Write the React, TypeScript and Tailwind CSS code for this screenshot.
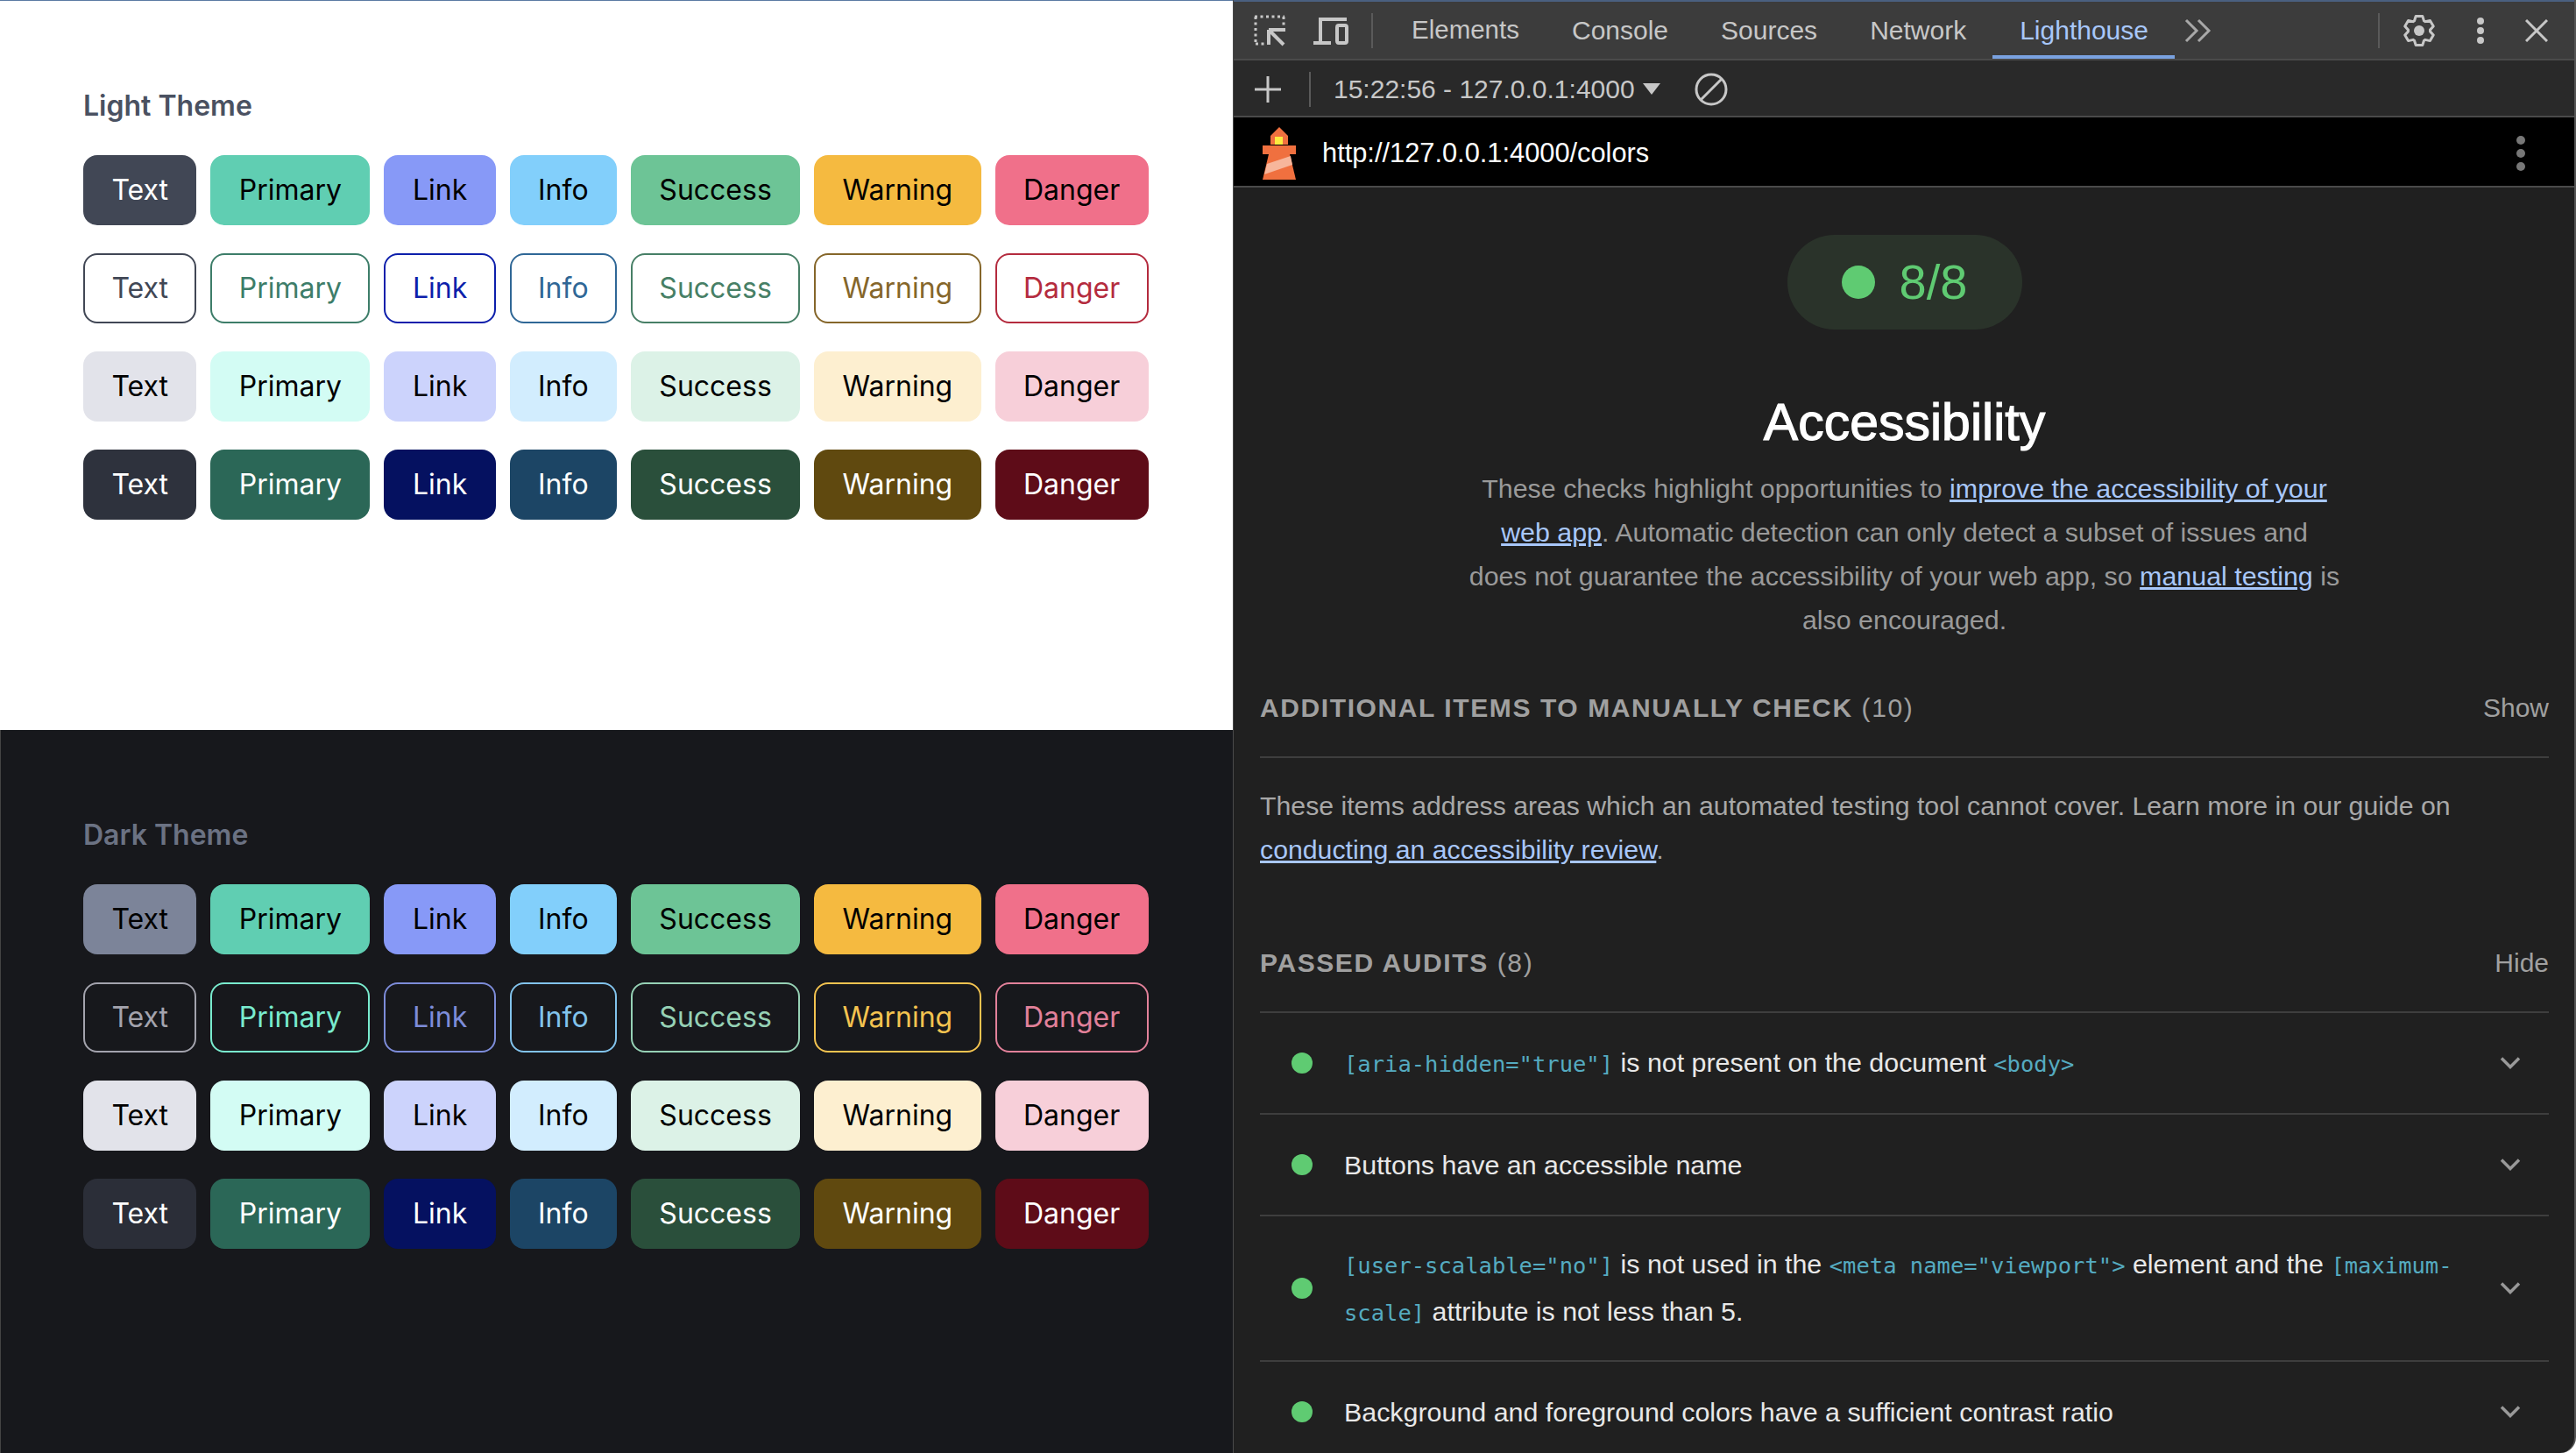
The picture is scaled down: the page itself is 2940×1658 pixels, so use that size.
const labels = ["Text", "Primary", "Link", "Info", "Success", "Warning", "Danger"];

const lightRows = [
  ["px-[32.4px] bg-[#414755] text-white", "px-[32.4px] bg-[#60ceb2] text-black", "px-[32.4px] bg-[#8799f7] text-black", "px-[32.4px] bg-[#82cffb] text-black", "px-[32.4px] bg-[#6dc496] text-black", "px-[32.4px] bg-[#f5ba40] text-black", "px-[32.4px] bg-[#f0708a] text-black"],
  ["px-[30.4px] border-2 border-[#414755] text-[#414755]", "px-[30.4px] border-2 border-[#3d7d69] text-[#3d7d69]", "px-[30.4px] border-2 border-[#0d1fab] text-[#0d1fab]", "px-[30.4px] border-2 border-[#2f6796] text-[#2f6796]", "px-[30.4px] border-2 border-[#477f66] text-[#477f66]", "px-[30.4px] border-2 border-[#85662a] text-[#85662a]", "px-[30.4px] border-2 border-[#b42b3e] text-[#b42b3e]"],
  ["px-[32.4px] bg-[#e2e3ea] text-black", "px-[32.4px] bg-[#d3fcf4] text-black", "px-[32.4px] bg-[#ccd3fc] text-black", "px-[32.4px] bg-[#d2edfe] text-black", "px-[32.4px] bg-[#dcf2e7] text-black", "px-[32.4px] bg-[#fdefd0] text-black", "px-[32.4px] bg-[#f7cfd9] text-black"],
  ["px-[32.4px] bg-[#2e323d] text-white", "px-[32.4px] bg-[#2b6757] text-white", "px-[32.4px] bg-[#051160] text-white", "px-[32.4px] bg-[#1c4565] text-white", "px-[32.4px] bg-[#2a4f3b] text-white", "px-[32.4px] bg-[#60490f] text-white", "px-[32.4px] bg-[#5e0c18] text-white"],
];

const darkRows = [
  ["px-[32.4px] bg-[#7c8499] text-black", ...lightRows[0].slice(1)],
  ["px-[30.4px] border-2 border-[#a3a3ad] text-[#a3a3ad]", "px-[30.4px] border-2 border-[#79ebce] text-[#79ebce]", "px-[30.4px] border-2 border-[#7d8cd9] text-[#7d8cd9]", "px-[30.4px] border-2 border-[#82c3ec] text-[#82c3ec]", "px-[30.4px] border-2 border-[#96d1b5] text-[#96d1b5]", "px-[30.4px] border-2 border-[#f3c350] text-[#f3c350]", "px-[30.4px] border-2 border-[#e2819a] text-[#e2819a]"],
  lightRows[2],
  ["px-[32.4px] bg-[#2b2e38] text-white", ...lightRows[3].slice(1)],
];

// six flat teeth, one pointing straight up
function gearPath() {
  const pts: string[] = [];
  for (let k = 0; k < 6; k++) {
    const a = -90 + k * 60;
    [[a - 26, 12.5], [a - 13, 17], [a + 13, 17], [a + 26, 12.5]].forEach(([deg, r]) => {
      const rad = (deg * Math.PI) / 180;
      pts.push(`${(19 + r * Math.cos(rad)).toFixed(2)} ${(19 + r * Math.sin(rad)).toFixed(2)}`);
    });
  }
  return `M${pts.join("L")}Z`;
}

function ThemePane({ title, rows, className, titleColor }: { title: string; rows: string[][]; className: string; titleColor: string }) {
  return (
    <div className={`h-[832px] pt-[96px] font-['Inter',sans-serif] ${className}`}>
      <h2 className={`h-12 mb-8 text-[32px] leading-[48px] font-semibold ${titleColor}`}>{title}</h2>
      <div className="flex flex-col gap-8">
        {rows.map((row, r) => (
          <div key={r} className="flex gap-4">
            {row.map((cls, i) => (
              <button key={i} className={`h-20 rounded-2xl text-[32px] flex items-center justify-center ${cls}`}>
                {labels[i]}
              </button>
            ))}
          </div>
        ))}
      </div>
    </div>
  );
}

function Lighthouse() {
  return (
    <svg width="40" height="60" viewBox="0 0 40 60">
      <path d="M20 0 L30 10 L30 20 L10 20 L10 10 Z" fill="#f0703f" />
      <rect x="15" y="11" width="9" height="9" fill="#fdeb3f" />
      <rect x="1" y="21" width="38" height="10" fill="#f0703f" />
      <path d="M8 31 H32 L39 60 H1 Z" fill="#f0703f" />
      <path d="M6 42 L33 33 L35 43 L3 54 Z" fill="#f7b69b" />
    </svg>
  );
}

function Chevron() {
  return (
    <svg width="24" height="14" viewBox="0 0 24 14" fill="none" stroke="#999" strokeWidth="3.5">
      <path d="M2 1.5 L12 11.5 L22 1.5" />
    </svg>
  );
}

function Code({ children }: { children: React.ReactNode }) {
  return <code className="font-['DejaVu_Sans_Mono',monospace] text-[25.5px] text-[#55abc0]">{children}</code>;
}

function AuditRow({ children, tall }: { children: React.ReactNode; tall?: boolean }) {
  return (
    <div className={`flex items-center border-b-2 border-[#3e3e3e] pl-[36px] pr-[32px] ${tall ? "h-[166px]" : "h-[116px]"}`}>
      <div className="w-6 h-6 rounded-full bg-[#5fcb72] shrink-0" />
      <div className="flex-1 ml-[36px] pr-[30px] text-[#e8e8e8] text-[30.4px] leading-[52px]">{children}</div>
      <Chevron />
    </div>
  );
}

function SectionHeader({ title, count, action }: { title: string; count: string; action: string }) {
  return (
    <div className="flex items-center justify-between border-b-2 border-[#3e3e3e] h-[111px] pb-[2px] text-[#a0a0a0]">
      <span className="tracking-[1.6px]">
        <span className="font-bold">{title}</span> {count}
      </span>
      <span>{action}</span>
    </div>
  );
}

export default function App() {
  return (
    <div className="flex w-[2940px] h-[1658px] overflow-hidden bg-white">
      <div className="w-[1407px] shrink-0 border-t border-[#5b7ba3]">
        <ThemePane title="Light Theme" rows={lightRows} className="pl-[95px] bg-white" titleColor="text-[#4a5161]" />
        <ThemePane title="Dark Theme" rows={darkRows} className="pl-[94px] bg-[#17181c] border-l border-[#444]" titleColor="text-[#6b7283]" />
      </div>

      <div className="flex-1 flex flex-col overflow-hidden rounded-br-[18px] bg-[#202020] border-l border-[#4a4a4a] border-r-2 border-r-[#555] font-['Liberation_Sans',sans-serif] text-[30px]">
        <div className="h-[2px] shrink-0 bg-[#4a6080]" />
        {/* tabs */}
        <div className="h-[67px] shrink-0 flex items-center bg-[#3c3c3c] border-b-2 border-[#4a4a4a] pl-[23px] text-[#c7c7c7]">
          <svg width="36" height="36" viewBox="0 0 36 36" fill="none" stroke="#c7c7c7" strokeWidth="3">
            <path d="M1 2H35M2 2V34M34 2V13M2 33H13" strokeDasharray="3 3.5" />
            <path d="M17 17H36M17 17V34M17 17L34 34" strokeWidth="4" />
          </svg>
          <svg className="ml-[32px]" width="42" height="36" viewBox="0 0 42 36" fill="none" stroke="#c7c7c7" strokeWidth="4">
            <path d="M8 30V5H38" />
            <path d="M0 32H20" />
            <rect x="27" y="12" width="11" height="20" rx="2" />
          </svg>
          <div className="w-[2px] h-10 bg-[#5a5a5a] ml-6" />
          <div className="flex items-center h-full ml-[14px]">
            <span className="px-[30px] h-full flex items-center text-[29.5px]">Elements</span>
            <span className="px-[30px] h-full flex items-center">Console</span>
            <span className="px-[30px] h-full flex items-center">Sources</span>
            <span className="px-[30px] h-full flex items-center">Network</span>
            <span className="pl-[31px] pr-[30px] h-full flex items-center text-[#a8c7fa] border-b-4 border-[#7aa2e0] pt-1">Lighthouse</span>
          </div>
          <svg className="ml-[11px]" width="32" height="28" viewBox="0 0 32 28" fill="none" stroke="#a8a8a8" strokeWidth="3">
            <path d="M2 2 L14 14 L2 26 M16 2 L28 14 L16 26" />
          </svg>
          <div className="w-[2px] h-10 bg-[#5a5a5a] ml-auto mr-[26px]" />
          <svg className="mr-[47px]" width="38" height="38" viewBox="0 0 38 38" fill="none" stroke="#c7c7c7" strokeWidth="3" strokeLinejoin="round">
            <path d={gearPath()} />
            <circle cx="19" cy="19" r="6" fill="#c7c7c7" stroke="none" />
          </svg>
          <div className="flex flex-col gap-[3px] mr-[47px]">
            <div className="w-2 h-2 rounded-full bg-[#c7c7c7]" />
            <div className="w-2 h-2 rounded-full bg-[#c7c7c7]" />
            <div className="w-2 h-2 rounded-full bg-[#c7c7c7]" />
          </div>
          <svg className="mr-[30px]" width="26" height="26" viewBox="0 0 26 26" stroke="#c7c7c7" strokeWidth="3">
            <path d="M1 1 L25 25 M25 1 L1 25" />
          </svg>
        </div>
        {/* report selector */}
        <div className="h-[65px] shrink-0 flex items-center bg-[#292929] border-b-2 border-[#4a4a4a] pl-6 pt-[2px] text-[#c7c7c7]">
          <svg width="30" height="30" viewBox="0 0 30 30" stroke="#c7c7c7" strokeWidth="3">
            <path d="M15 0V30M0 15H30" />
          </svg>
          <div className="w-[2px] h-10 bg-[#5a5a5a] ml-[32px] mr-[26px]" />
          <span>15:22:56 - 127.0.0.1:4000</span>
          <svg className="ml-[9px]" width="20" height="13" viewBox="0 0 20 13" fill="#c7c7c7">
            <path d="M0 0H20L10 13Z" />
          </svg>
          <svg className="ml-[39px]" width="38" height="38" viewBox="0 0 38 38" fill="none" stroke="#c7c7c7" strokeWidth="3">
            <circle cx="19" cy="19" r="17" />
            <path d="M7 31 L31 7" />
          </svg>
        </div>
        {/* url bar */}
        <div className="h-[80px] shrink-0 flex items-center bg-black border-b-2 border-[#4a4a4a] pl-8 pr-[56px] pt-1 text-white">
          <Lighthouse />
          <span className="ml-[29px] text-[30.8px]">http://127.0.0.1:4000/colors</span>
          <div className="flex flex-col gap-[5px] ml-auto">
            <div className="w-[10px] h-[10px] rounded-full bg-[#777]" />
            <div className="w-[10px] h-[10px] rounded-full bg-[#777]" />
            <div className="w-[10px] h-[10px] rounded-full bg-[#777]" />
          </div>
        </div>

        <div className="flex-1 min-h-0 pl-[30px] pr-[29px]">
          <div className="flex flex-col items-center">
            <div className="mt-[54px] w-[268px] h-[108px] rounded-[54px] bg-[#2a332a] flex items-center justify-center gap-[28px] text-[#5fcb72] text-[56px]">
              <div className="w-[38px] h-[38px] rounded-full bg-[#5fcb72]" />
              <span>8/8</span>
            </div>
            <h1 className="mt-[71px] text-[59px] leading-[70px] text-white [-webkit-text-stroke:1.2px_white]">Accessibility</h1>
            <p className="mt-[15px] w-[1040px] text-center text-[30.4px] leading-[50px] text-[#9a9a9a]">
              These checks highlight opportunities to <a className="underline text-[#a8c7fa]">improve the accessibility of your<br />web app</a>. Automatic detection can only detect a subset of issues and<br />does not guarantee the accessibility of your web app, so <a className="underline text-[#a8c7fa]">manual testing</a> is<br />also encouraged.
            </p>
          </div>

          <div className="mt-[22px]">
            <SectionHeader title="ADDITIONAL ITEMS TO MANUALLY CHECK" count="(10)" action="Show" />
            <p className="mt-[30px] text-[30.25px] leading-[50px] text-[#a8a8a8] pr-[100px]">
              These items address areas which an automated testing tool cannot cover. Learn more in our guide on <a className="underline text-[#a8c7fa]">conducting an accessibility review</a>.
            </p>
          </div>

          <div className="mt-[50px]">
            <SectionHeader title="PASSED AUDITS" count="(8)" action="Hide" />
            <AuditRow>
              <Code>[aria-hidden="true"]</Code> <span>is not present on the document</span> <Code>&lt;body&gt;</Code>
            </AuditRow>
            <AuditRow>Buttons have an accessible name</AuditRow>
            <AuditRow tall>
              <Code>[user-scalable="no"]</Code> <span>is not used in the</span> <Code>&lt;meta name="viewport"&gt;</Code> <span>element and the</span> <Code>[maximum-</Code><br /><Code>scale]</Code> <span>attribute is not less than 5.</span>
            </AuditRow>
            <AuditRow>Background and foreground colors have a sufficient contrast ratio</AuditRow>
          </div>
        </div>
      </div>
    </div>
  );
}
